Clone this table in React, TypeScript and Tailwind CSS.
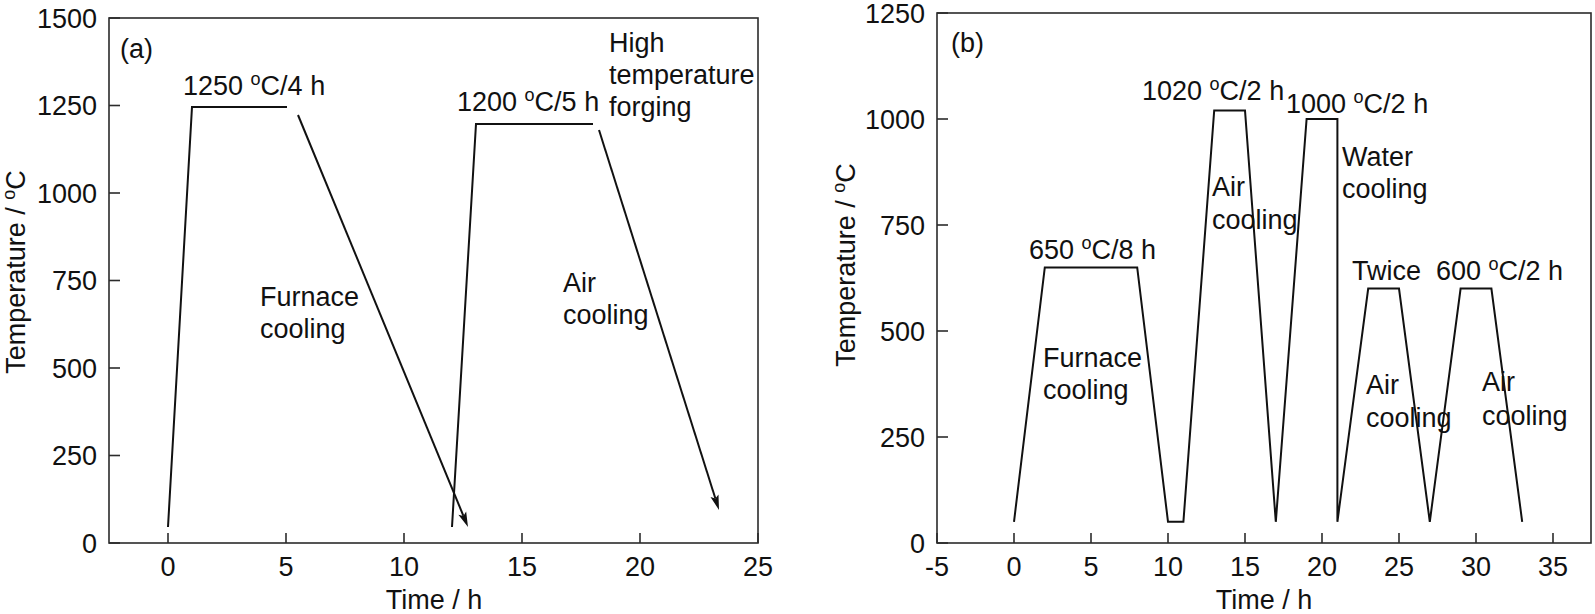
import React from "react";

// ── helpers ───────────────────────────────────────────────────────────────────

const INK = "#111";
const AXIS = "#2b2b2b";
const FS = 27;
const SUP = 18;

function arrowHead(x1: number, y1: number, x2: number, y2: number) {
  const dx = x2 - x1;
  const dy = y2 - y1;
  const len = Math.hypot(dx, dy);
  const ux = dx / len;
  const uy = dy / len;
  const bx = x2 - 15 * ux;
  const by = y2 - 15 * uy;
  const nx = x2 - 12 * ux;
  const ny = y2 - 12 * uy;
  const px = -uy * 4.2;
  const py = ux * 4.2;
  return `M${x2},${y2} L${bx + px},${by + py} L${nx},${ny} L${bx - px},${by - py} Z`;
}

function Arrow({ x1, y1, x2, y2 }: { x1: number; y1: number; x2: number; y2: number }) {
  const len = Math.hypot(x2 - x1, y2 - y1);
  const ex = x2 - ((x2 - x1) / len) * 12;
  const ey = y2 - ((y2 - y1) / len) * 12;
  return (
    <g>
      <line x1={x1} y1={y1} x2={ex} y2={ey} stroke={INK} strokeWidth={2} />
      <path d={arrowHead(x1, y1, x2, y2)} fill={INK} />
    </g>
  );
}

// "1250 °C/4 h" style label with superscript o
function Deg({ x, y, temp, rest }: { x: number; y: number; temp: string; rest: string }) {
  return (
    <text x={x} y={y} fontSize={FS} fill={INK}>
      {temp}{" "}
      <tspan fontSize={SUP} dy={-10}>o</tspan>
      <tspan fontSize={FS} dy={10}>{rest}</tspan>
    </text>
  );
}

function Txt({ x, y, children, anchor = "start" }: { x: number; y: number; children: React.ReactNode; anchor?: "start" | "middle" | "end" }) {
  return (
    <text x={x} y={y} fontSize={FS} fill={INK} textAnchor={anchor}>
      {children}
    </text>
  );
}

function YTitle({ x, y }: { x: number; y: number }) {
  return (
    <text x={0} y={0} fontSize={FS} fill={INK} textAnchor="middle" transform={`translate(${x},${y}) rotate(-90)`}>
      Temperature /{" "}
      <tspan fontSize={SUP} dy={-10}>o</tspan>
      <tspan fontSize={FS} dy={10}>C</tspan>
    </text>
  );
}

// ── axes frame ────────────────────────────────────────────────────────────────

function Frame({ left, top, right, bottom, xticks, yticks }: {
  left: number; top: number; right: number; bottom: number;
  xticks: { v: string; x: number }[];
  yticks: { v: string; y: number }[];
}) {
  return (
    <g>
      <rect x={left} y={top} width={right - left} height={bottom - top} fill="none" stroke={AXIS} strokeWidth={1.6} />
      {xticks.map((t) => (
        <g key={t.v}>
          <line x1={t.x} y1={bottom} x2={t.x} y2={bottom - 10} stroke={AXIS} strokeWidth={1.6} />
          <Txt x={t.x} y={576} anchor="middle">{t.v}</Txt>
        </g>
      ))}
      {yticks.map((t) => (
        <g key={t.v}>
          <line x1={left} y1={t.y} x2={left + 11} y2={t.y} stroke={AXIS} strokeWidth={1.6} />
          <Txt x={left - 12} y={t.y + 9.5} anchor="end">{t.v}</Txt>
        </g>
      ))}
    </g>
  );
}

// ── panel (a) ─────────────────────────────────────────────────────────────────

function PanelA() {
  const xa = (t: number) => 168 + 23.6 * t;
  const ya = (T: number) => 543 - 0.35 * T;
  return (
    <svg width={795} height={614} viewBox="0 0 795 614" className="shrink-0">
      <Frame
        left={109} top={18} right={758} bottom={543}
        xticks={[0, 5, 10, 15, 20, 25].map((t) => ({ v: String(t), x: xa(t) }))}
        yticks={[0, 250, 500, 750, 1000, 1250, 1500].map((T) => ({ v: String(T), y: ya(T) }))}
      />
      <polyline points="168,527 192,107 287,107" fill="none" stroke={INK} strokeWidth={2} />
      <polyline points="452,527 476,124 593,124" fill="none" stroke={INK} strokeWidth={2} />
      <Arrow x1={298} y1={115} x2={468} y2={527} />
      <Arrow x1={599} y1={130} x2={719} y2={510} />

      <Txt x={120} y={58}>(a)</Txt>
      <Deg x={183} y={95} temp="1250" rest="C/4 h" />
      <Deg x={457} y={111} temp="1200" rest="C/5 h" />
      <Txt x={609} y={52}>High</Txt>
      <Txt x={609} y={84}>temperature</Txt>
      <Txt x={609} y={116}>forging</Txt>
      <Txt x={260} y={306}>Furnace</Txt>
      <Txt x={260} y={338}>cooling</Txt>
      <Txt x={563} y={292}>Air</Txt>
      <Txt x={563} y={324}>cooling</Txt>

      <Txt x={434} y={609} anchor="middle">Time / h</Txt>
      <YTitle x={25} y={272} />
    </svg>
  );
}

// ── panel (b) ─────────────────────────────────────────────────────────────────

function PanelB() {
  const xb = (t: number) => 1014 + 15.4 * t;
  const yb = (T: number) => 543 - 0.424 * T;
  const path: [number, number][] = [
    [0, 50], [2, 650], [8, 650], [10, 50], [11, 50], [13, 1020], [15, 1020], [17, 50],
    [19, 1000], [21, 1000], [21, 50], [23, 600], [25, 600], [27, 50], [29, 600], [31, 600], [33, 50],
  ];
  const pts = path.map(([t, T]) => `${xb(t)},${yb(T)}`).join(" ");
  return (
    <svg width={800} height={614} viewBox="795 0 800 614" className="shrink-0">
      <Frame
        left={937} top={13} right={1591} bottom={543}
        xticks={[-5, 0, 5, 10, 15, 20, 25, 30, 35].map((t) => ({ v: String(t), x: xb(t) }))}
        yticks={[0, 250, 500, 750, 1000, 1250].map((T) => ({ v: String(T), y: yb(T) }))}
      />
      <polyline points={pts} fill="none" stroke={INK} strokeWidth={2} strokeLinejoin="miter" />

      <Txt x={951} y={52}>(b)</Txt>
      <Deg x={1029} y={259} temp="650" rest="C/8 h" />
      <Deg x={1142} y={100} temp="1020" rest="C/2 h" />
      <Deg x={1286} y={113} temp="1000" rest="C/2 h" />
      <Txt x={1043} y={367}>Furnace</Txt>
      <Txt x={1043} y={399}>cooling</Txt>
      <Txt x={1212} y={196}>Air</Txt>
      <Txt x={1212} y={229}>cooling</Txt>
      <Txt x={1342} y={166}>Water</Txt>
      <Txt x={1342} y={198}>cooling</Txt>
      <Txt x={1352} y={280}>Twice</Txt>
      <Deg x={1436} y={280} temp="600" rest="C/2 h" />
      <Txt x={1366} y={394}>Air</Txt>
      <Txt x={1366} y={427}>cooling</Txt>
      <Txt x={1482} y={391}>Air</Txt>
      <Txt x={1482} y={425}>cooling</Txt>

      <Txt x={1264} y={609} anchor="middle">Time / h</Txt>
      <YTitle x={855} y={265} />
    </svg>
  );
}

// ── main ──────────────────────────────────────────────────────────────────────

export default function App() {
  return (
    <div className="flex w-[1595px] h-[614px] overflow-hidden bg-white font-['Liberation_Sans',Arial,sans-serif]">
      <PanelA />
      <PanelB />
    </div>
  );
}
